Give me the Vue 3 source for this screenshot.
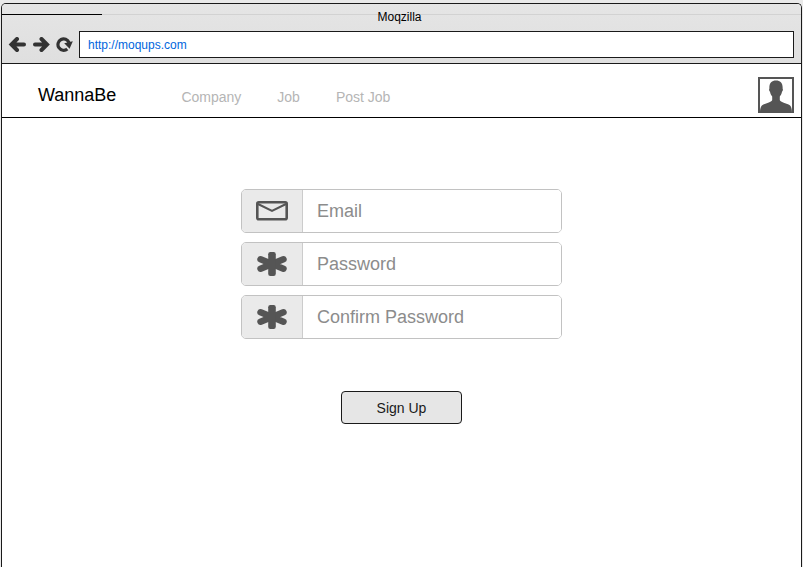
<script setup>
import { ref } from 'vue'

const url = ref('http://moqups.com')
const links = ['Company', 'Job', 'Post Job']
const fields = ref([
  { id: 'email', label: 'Email', type: 'email', icon: 'mail', value: '' },
  { id: 'password', label: 'Password', type: 'password', icon: 'asterisk', value: '' },
  { id: 'confirm', label: 'Confirm Password', type: 'password', icon: 'asterisk', value: '' }
])
</script>

<template>
  <div class="desktop">
    <div class="window">
      <div class="chrome">
        <div class="loading"><span class="loaded"></span></div>
        <div class="title">Moqzilla</div>
        <div class="toolbar">
          <button class="tool" type="button" aria-label="Back">
            <svg width="18" height="16" viewBox="0 0 18 16">
              <path d="M16 7.500H4M9 2L3.500 7.500L9 13" fill="none" stroke="#333" stroke-width="4" stroke-linecap="round" stroke-linejoin="miter" />
            </svg>
          </button>
          <button class="tool" type="button" aria-label="Forward">
            <svg width="18" height="16" viewBox="0 0 18 16">
              <path d="M3 7.500H14M9.500 2L15 7.500L9.500 13" fill="none" stroke="#333" stroke-width="4" stroke-linecap="round" stroke-linejoin="miter" />
            </svg>
          </button>
          <button class="tool" type="button" aria-label="Reload">
            <svg width="18" height="16" viewBox="0 0 18 16">
              <path d="M11.300 12A5.700 5.700 0 1 1 13 5.600" fill="none" stroke="#333" stroke-width="3.200" />
              <path d="M8.200 6.200L16.800 4.200L13.600 11.800z" fill="#333" />
            </svg>
          </button>
          <input v-model="url" class="address" type="text" aria-label="Address" />
        </div>
      </div>

      <header class="header">
        <a class="brand" href="#">WannaBe</a>
        <nav class="nav">
          <a v-for="link in links" :key="link" href="#">{{ link }}</a>
        </nav>
        <a class="avatar" href="#" aria-label="Profile">
          <svg width="32" height="33" viewBox="0 0 32 33">
            <path d="M16 0.500C11.500 0.500 9 3.500 9.400 8.500C8.800 9 9.100 11 10 11.800C10.400 14 11.200 15.500 12.200 16.500V20C11.500 22 8 22.800 4 24.200C1.200 25.300 0 27.500 0 33H32C32 27.500 30.800 25.300 28 24.200C24 22.800 20.500 22 19.800 20V16.500C20.800 15.500 21.600 14 22 11.800C22.900 11 23.200 9 22.600 8.500C23 3.500 20.500 0.500 16 0.500Z" fill="#555" />
          </svg>
        </a>
      </header>

      <form class="signup" @submit.prevent>
        <div v-for="field in fields" :key="field.id" class="field">
          <label class="addon" :for="field.id" :aria-label="field.label">
            <svg v-if="field.icon === 'mail'" width="32" height="20" viewBox="0 0 32 20">
              <rect x="1.300" y="1.300" width="29.400" height="17" rx="1.500" fill="none" stroke="#555" stroke-width="2.600" />
              <path d="M2 3L16 10L30 3" fill="none" stroke="#555" stroke-width="2" />
            </svg>
            <svg v-else width="30" height="24" viewBox="0 0 30 24">
              <path d="M3.600 7.300L26.400 16.700M26.400 7.300L3.600 16.700" fill="none" stroke="#555" stroke-width="6.600" stroke-linecap="round" />
              <rect x="11.200" y="0" width="7.600" height="24" rx="2.200" fill="#555" />
            </svg>
          </label>
          <input :id="field.id" v-model="field.value" :type="field.type" :placeholder="field.label" />
        </div>
        <button class="submit" type="submit">Sign Up</button>
      </form>
    </div>
  </div>
</template>

<style>
body {
  margin: 0;
}
</style>

<style scoped>
.desktop {
  box-sizing: border-box;
  display: flex;
  min-height: 100vh;
  padding: 3px 1px 0;
  background: #e9e9e9;
  font-family: "Liberation Sans", Arial, sans-serif;
}

.window {
  flex: 1;
  min-width: 0;
  border: 1px solid #1a1a1a;
  border-bottom: 0;
  border-radius: 5px 5px 0 0;
  background: #fff;
}

.chrome {
  position: relative;
  padding-bottom: 5px;
  border-bottom: 1px solid #1a1a1a;
  border-radius: 4px 4px 0 0;
  background: linear-gradient(#e5e5e5, #dfdfdf);
}

.loading {
  position: absolute;
  top: 10px;
  left: 0;
  right: 0;
  height: 1px;
  background: #d2d2d2;
}

.loaded {
  display: block;
  width: 100px;
  height: 1px;
  background: #000;
}

.title {
  position: relative;
  padding: 6px 4px 0 0;
  font-size: 12px;
  line-height: 14px;
  text-align: center;
  color: #000;
}

.toolbar {
  display: flex;
  align-items: center;
  gap: 6px;
  padding: 7px 7px 0 6px;
}

.tool {
  display: flex;
  padding: 0;
  border: 0;
  background: none;
}

.address {
  box-sizing: border-box;
  flex: 1;
  min-width: 0;
  height: 27px;
  margin-left: -1px;
  padding: 0 8px;
  border: 1px solid #1a1a1a;
  border-radius: 0;
  background: #fff;
  color: #0066dd;
  font-family: inherit;
  font-size: 12px;
}

.header {
  display: flex;
  align-items: center;
  height: 53px;
  padding: 0 7px 0 36px;
  border-bottom: 1px solid #000;
}

.header a {
  text-decoration: none;
}

.brand {
  padding-top: 9px;
  color: #000;
  font-size: 18px;
  line-height: 20px;
}

.nav {
  display: flex;
  gap: 36px;
  margin-left: 65px;
  padding-top: 13px;
  font-size: 14px;
  line-height: 16px;
}

.nav a {
  color: #b5b5b5;
}

.avatar {
  display: flex;
  margin-left: auto;
  margin-top: 9px;
  padding-top: 1px;
  border: 2px solid #555;
  border-bottom: 0;
  background: #fff;
}

.signup {
  display: flex;
  flex-direction: column;
  align-items: center;
  gap: 9px;
  padding: 71px 16px 40px;
}

.field {
  box-sizing: border-box;
  display: flex;
  width: 100%;
  max-width: 321px;
  height: 44px;
  overflow: hidden;
  border: 1px solid #c2c2c2;
  border-radius: 5px;
}

.addon {
  display: flex;
  flex: none;
  align-items: center;
  justify-content: center;
  width: 60px;
  border-right: 1px solid #ccc;
  background: #eaeaea;
}

.field input {
  flex: 1;
  min-width: 0;
  padding: 0 14px;
  border: 0;
  outline: 0;
  background: #fff;
  color: #333;
  font-family: inherit;
  font-size: 18px;
}

.field input::placeholder {
  color: #8c8c8c;
  opacity: 1;
}

.submit {
  width: 121px;
  height: 33px;
  margin-top: 43px;
  padding: 0;
  border: 1px solid #1a1a1a;
  border-radius: 4px;
  background: #e6e6e6;
  color: #1a1a1a;
  font-family: inherit;
  font-size: 14px;
}
</style>
